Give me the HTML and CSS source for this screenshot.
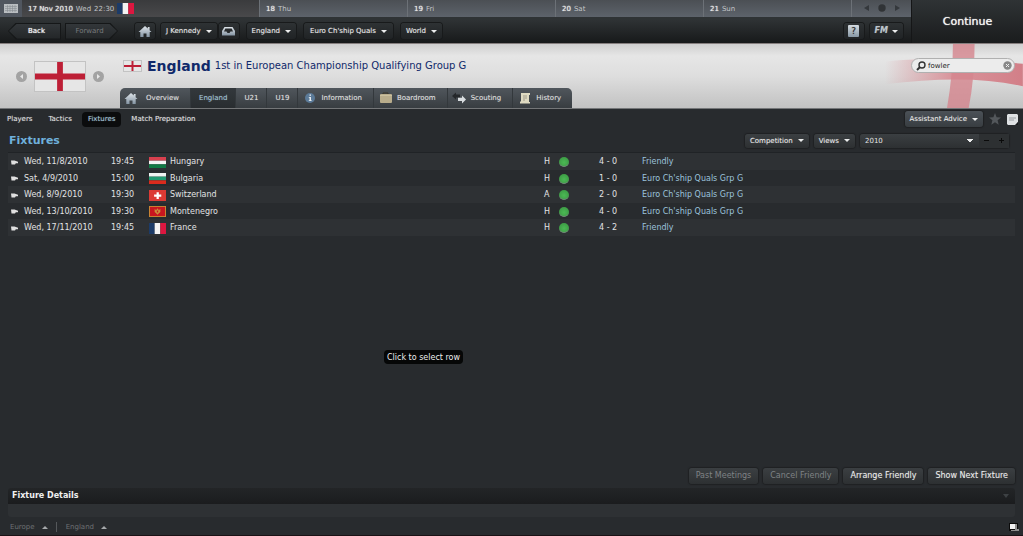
FILE: index.html
```html
<!DOCTYPE html>
<html lang="en">
<head>
    <meta charset="UTF-8">
    <meta name="viewport" content="width=device-width, initial-scale=1.0">
    <title>England - Fixtures</title>
    <link rel="stylesheet" href="styles.css">
</head>
<body>
    <!-- shared icons and flags -->
    <svg class="defs" width="0" height="0" aria-hidden="true">
        <defs>
            <linearGradient id="steel" x1="0" y1="0" x2="0" y2="1">
                <stop offset="0" stop-color="#dfe5ea"/>
                <stop offset="1" stop-color="#8494a3"/>
            </linearGradient>
            <linearGradient id="crossFade" x1="0" y1="0" x2="1" y2="0">
                <stop offset="0" stop-color="#d88a92" stop-opacity="0"/>
                <stop offset="0.5" stop-color="#d88a92" stop-opacity="0.9"/>
                <stop offset="1" stop-color="#d27f88"/>
            </linearGradient>
        </defs>
        <symbol id="home" viewBox="0 0 14 13">
            <path d="M7 1 L0.5 7 L2.3 7 L2.3 12 L5.5 12 L5.5 8.5 L8.5 8.5 L8.5 12 L11.7 12 L11.7 7 L13.5 7 L11.6 5.2 L11.6 2 L9.8 2 L9.8 3.6 Z" fill="url(#steel)"/>
        </symbol>
        <symbol id="england" viewBox="0 0 52 30" preserveAspectRatio="none">
            <path fill="#e6e6e6" d="M0 0h52v30H0z"/>
            <path fill="#bd1f36" d="M23 0h6v30h-6zM0 12h52v6H0z"/>
        </symbol>
        <symbol id="france" viewBox="0 0 18 12" preserveAspectRatio="none">
            <path fill="#1c3b68" d="M0 0h6v12H0z"/><path fill="#f3f3f3" d="M6 0h6v12H6z"/><path fill="#dd1740" d="M12 0h6v12h-6z"/>
        </symbol>
        <symbol id="hungary" viewBox="0 0 18 12" preserveAspectRatio="none">
            <path fill="#d8404e" d="M0 0h18v4H0z"/><path fill="#f3f3f3" d="M0 4h18v4H0z"/><path fill="#127a45" d="M0 8h18v4H0z"/>
        </symbol>
        <symbol id="bulgaria" viewBox="0 0 18 12" preserveAspectRatio="none">
            <path fill="#f0f2f1" d="M0 0h18v4H0z"/><path fill="#229a72" d="M0 4h18v4H0z"/><path fill="#da2b1d" d="M0 8h18v4H0z"/>
        </symbol>
        <symbol id="switzerland" viewBox="0 0 18 12" preserveAspectRatio="none">
            <path fill="#dc3a34" d="M0 0h18v12H0z"/><path fill="#fff" d="M8 2.5h2.4v2.4h2.6v2.4h-2.6v2.4H8V7.300H5.400V4.900H8z"/>
        </symbol>
        <symbol id="montenegro" viewBox="0 0 18 12" preserveAspectRatio="none">
            <path fill="#c98a35" d="M0 0h18v12H0z"/><path fill="#c8161f" d="M1 1h16v10H1z"/>
            <path d="M6 3l1.500 1.500L9 2.500l1.500 2L12 3v3.500L10.500 8 9 9.500 7.500 8 6 6.500z" fill="#c98f3c"/>
            <path d="M8.300 5h1.400v2H8.300z" fill="#c8161f"/>
        </symbol>
        <symbol id="hand" viewBox="0 0 7 5">
            <path d="M0 0.500h3.500L7 1.700v1.500H4.800L4 4.600H0.500z" fill="#e0e0e0"/>
        </symbol>
    </svg>

    <header class="top">
        <div class="top-left">
            <div class="calendar">
                <button type="button" class="cal-icon" aria-label="Calendar">
                    <svg width="14" height="9" viewBox="0 0 14 9"><path fill="#b9bdc1" d="M0 0h14v9H0z"/><path d="M1 2.500h12M1 4.500h12M1 6.500h12M3.500 1v7M6 1v7M8.500 1v7M11 1v7" stroke="#7f848a" stroke-width="0.500"/></svg>
                </button>
                <div class="day today"><b>17 Nov 2010</b> <span>Wed</span> <span>22:30</span>
                    <svg class="flag"><use href="#france"/></svg>
                </div>
                <div class="day"><b>18</b> <span>Thu</span></div>
                <div class="day"><b>19</b> <span>Fri</span></div>
                <div class="day"><b>20</b> <span>Sat</span></div>
                <div class="day"><b>21</b> <span>Sun</span></div>
                <div class="cal-nav">
                    <button type="button" aria-label="Previous"><svg width="5" height="6" viewBox="0 0 5 6"><path d="M5 0v6L0 3z" fill="#34383c"/></svg></button>
                    <button type="button" aria-label="Today"><svg width="8" height="8" viewBox="0 0 8 8"><circle cx="4" cy="4" r="3.700" fill="#303336"/></svg></button>
                    <button type="button" aria-label="Next"><svg width="5" height="6" viewBox="0 0 5 6"><path d="M0 0v6l5-3z" fill="#34383c"/></svg></button>
                </div>
            </div>
            <nav class="toolbar">
                <button type="button" class="arrow back"><span>Back</span></button>
                <button type="button" class="arrow forward" disabled><span>Forward</span></button>
                <button type="button" class="btn icon-btn" aria-label="Home"><svg width="14" height="13"><use href="#home"/></svg></button>
                <button type="button" class="btn menu">J Kennedy</button>
                <button type="button" class="btn icon-btn" aria-label="Inbox">
                    <svg width="13" height="9" viewBox="0 0 13 9"><path d="M2.500 0h8L13 4v4.500H0V4zM3.300 1.500L2 4.500h2.500l1 1.500h2l1-1.500H11L9.700 1.500z" fill="url(#steel)" fill-rule="evenodd"/></svg>
                </button>
                <button type="button" class="btn menu spaced">England</button>
                <button type="button" class="btn menu spaced wide">Euro Ch'ship Quals</button>
                <button type="button" class="btn menu spaced">World</button>
                <div class="toolbar-end">
                    <button type="button" class="btn icon-btn" aria-label="Help"><span class="help">?</span></button>
                    <button type="button" class="btn menu fm"><i>FM</i></button>
                </div>
            </nav>
        </div>
        <button type="button" class="continue">Continue</button>
    </header>

    <section class="banner">
        <svg class="cross" viewBox="0 0 140 65" aria-hidden="true">
            <path d="M0 18 Q35 12 140 20 V43 Q85 30 0 41 Z" fill="url(#crossFade)"/>
            <path d="M69 0H91Q91 35 85 65H63Q69 30 69 0Z" fill="#d5848d" opacity="0.800"/>
        </svg>
        <div class="badge">
            <button type="button" class="round" aria-label="Previous team"><svg width="3" height="5" viewBox="0 0 3 5"><path d="M3 0v5L0 2.500z" fill="#e8e8e8"/></svg></button>
            <svg class="big-flag"><use href="#england"/></svg>
            <button type="button" class="round" aria-label="Next team"><svg width="3" height="5" viewBox="0 0 3 5"><path d="M0 0v5l3-2.500z" fill="#e8e8e8"/></svg></button>
        </div>
        <div class="team">
            <div class="title">
                <svg class="title-flag"><use href="#england"/></svg>
                <h1>England</h1>
                <p>1st in European Championship Qualifying Group G</p>
            </div>
            <nav class="tabs">
                <a href="#" class="with-icon first"><svg width="14" height="13"><use href="#home"/></svg>Overview</a>
                <a href="#" class="active">England</a>
                <a href="#">U21</a>
                <a href="#">U19</a>
                <a href="#" class="with-icon">
                    <svg width="14" height="12" viewBox="0 0 14 12"><circle cx="8" cy="6" r="5" fill="#5b7a98"/><path d="M7.500 2.500h1.500v1.300H7.500zM6.800 5H9v3.200h.700V9H6.800v-.8h.7V5.800h-.7z" fill="#e9eef2"/></svg>Information</a>
                <a href="#" class="with-icon">
                    <svg width="14" height="12" viewBox="0 0 14 12"><path d="M5 2V1h5v1" stroke="#3a3426" fill="none"/><rect x="2" y="2" width="12" height="9" rx="1" fill="#b9ad8c"/><path d="M2 3.500h12" stroke="#cbc09f"/></svg>Boardroom</a>
                <a href="#" class="with-icon">
                    <svg width="14" height="12" viewBox="0 0 14 12"><path d="M0 4l4-3.500v2h4v3H4v2z" fill="#25282b"/><path d="M14 7.500l-4-4v2.300H6v3.200h4v2.500z" fill="#d9dde0"/></svg>Scouting</a>
                <a href="#" class="with-icon last">
                    <svg width="14" height="12" viewBox="0 0 14 12"><path d="M4 1h9v2h-1v7h1v1.500H3V9.500h1z" fill="#dedac1"/><path d="M6 4h4M6 6h4M6 8h2" stroke="#8f8c7c" stroke-width="0.800"/></svg>History</a>
            </nav>
        </div>
        <div class="search">
            <svg width="10" height="10" viewBox="0 0 10 10"><circle cx="6" cy="4" r="3" fill="none" stroke="#333" stroke-width="1.400"/><path d="M4 6L1 9" stroke="#333" stroke-width="2"/></svg>
            <input type="text" aria-label="Search" value="fowler">
            <button type="button" aria-label="Clear search"><svg width="9" height="9" viewBox="0 0 9 9"><circle cx="4.500" cy="4.500" r="4.200" fill="#888"/><path d="M3 3l3 3M6 3L3 6" stroke="#eee"/></svg></button>
        </div>
    </section>

    <nav class="subnav">
        <a href="#">Players</a>
        <a href="#">Tactics</a>
        <a href="#" class="active">Fixtures</a>
        <a href="#">Match Preparation</a>
        <div class="subnav-end">
            <button type="button" class="btn menu advice">Assistant Advice</button>
            <button type="button" class="plain" aria-label="Bookmark"><svg width="12" height="12" viewBox="0 0 12 12"><path d="M6 0l1.600 4.200L12 4.500 8.600 7.300 9.700 11.700 6 9.200 2.300 11.700 3.400 7.300 0 4.500l4.400-.3z" fill="#53575b"/></svg></button>
            <button type="button" class="plain" aria-label="Notes"><svg width="11" height="11" viewBox="0 0 11 11"><path d="M1 0h9l1 1v7l-2 3H1l-1-1V1z" fill="#dfe2e4"/><path d="M2 4h7M2 6h5" stroke="#9a9ea2"/><path d="M11 8v3H8z" fill="#17191b"/></svg></button>
        </div>
    </nav>

    <main>
        <div class="heading">
            <h2>Fixtures</h2>
            <button type="button" class="btn menu">Competition</button>
            <button type="button" class="btn menu">Views</button>
            <div class="season">
                <select aria-label="Season"><option>2010</option></select>
                <button type="button" aria-label="Previous season"><svg width="5" height="5" viewBox="0 0 5 5"><path d="M0 2h5v1H0z" fill="#0a0a0a"/></svg></button>
                <button type="button" aria-label="Next season"><svg width="5" height="5" viewBox="0 0 5 5"><path d="M0 2h5v1H0zM2 0h1v5H2z" fill="#0a0a0a"/></svg></button>
            </div>
        </div>

        <table class="fixtures">
            <colgroup>
                <col class="c-hand"><col class="c-date"><col class="c-time"><col class="c-flag"><col class="c-team">
                <col class="c-venue"><col class="c-result"><col class="c-score"><col class="c-comp">
            </colgroup>
            <tbody>
                <tr>
                    <td><svg class="hand"><use href="#hand"/></svg></td><td>Wed, 11/8/2010</td><td>19:45</td>
                    <td><svg class="flag"><use href="#hungary"/></svg></td><td>Hungary</td>
                    <td>H</td><td><span class="dot"></span></td><td>4 - 0</td><td><a href="#">Friendly</a></td>
                </tr>
                <tr>
                    <td><svg class="hand"><use href="#hand"/></svg></td><td>Sat, 4/9/2010</td><td>15:00</td>
                    <td><svg class="flag"><use href="#bulgaria"/></svg></td><td>Bulgaria</td>
                    <td>H</td><td><span class="dot"></span></td><td>1 - 0</td><td><a href="#">Euro Ch'ship Quals Grp G</a></td>
                </tr>
                <tr>
                    <td><svg class="hand"><use href="#hand"/></svg></td><td>Wed, 8/9/2010</td><td>19:30</td>
                    <td><svg class="flag"><use href="#switzerland"/></svg></td><td>Switzerland</td>
                    <td>A</td><td><span class="dot"></span></td><td>2 - 0</td><td><a href="#">Euro Ch'ship Quals Grp G</a></td>
                </tr>
                <tr>
                    <td><svg class="hand"><use href="#hand"/></svg></td><td>Wed, 13/10/2010</td><td>19:30</td>
                    <td><svg class="flag"><use href="#montenegro"/></svg></td><td>Montenegro</td>
                    <td>H</td><td><span class="dot"></span></td><td>4 - 0</td><td><a href="#">Euro Ch'ship Quals Grp G</a></td>
                </tr>
                <tr>
                    <td><svg class="hand"><use href="#hand"/></svg></td><td>Wed, 17/11/2010</td><td>19:45</td>
                    <td><svg class="flag"><use href="#france"/></svg></td><td>France</td>
                    <td>H</td><td><span class="dot"></span></td><td>4 - 2</td><td><a href="#">Friendly</a></td>
                </tr>
            </tbody>
        </table>

        <div class="tooltip" role="tooltip">Click to select row</div>

        <div class="actions">
            <button type="button" class="btn" disabled>Past Meetings</button>
            <button type="button" class="btn" disabled>Cancel Friendly</button>
            <button type="button" class="btn">Arrange Friendly</button>
            <button type="button" class="btn">Show Next Fixture</button>
        </div>

        <section class="details">
            <h3>Fixture Details</h3>
            <div class="details-body"></div>
        </section>
    </main>

    <footer>
        <a href="#">Europe</a>
        <a href="#">England</a>
        <svg class="screen" width="10" height="8" viewBox="0 0 10 8"><path fill="#0a0a0a" d="M0 0h9v8H0z"/><path fill="#f2f2f2" d="M1 1h5v5H1z"/><path fill="#8f8f8f" d="M6 1h2v5h2v2H2V7h4z"/></svg>
    </footer>
</body>
</html>
```

FILE: styles.css
```css
* {
    box-sizing: border-box;
}

body {
    margin: 0;
    min-height: 100vh;
    display: flex;
    flex-direction: column;
    font-family: "DejaVu Sans", Verdana, sans-serif;
    font-size: 8px;
    line-height: 10px;
    color: #e2e3e4;
    background: #282b2e;
}

h1, h2, h3, p {
    margin: 0;
}

a {
    color: inherit;
    text-decoration: none;
}

button, input, select {
    margin: 0;
    padding: 0;
    border: none;
    background: none;
    color: inherit;
    font: inherit;
}

svg {
    display: block;
    flex: none;
}

.defs {
    position: absolute;
}

.flag {
    width: 17px;
    height: 11px;
}

/* top bars */
.top {
    display: flex;
    height: 44px;
    border-bottom: 1px solid #857e7e;
    background: linear-gradient(#2f3335 45%, #17191a);
}

.top-left {
    flex: 1;
}

.calendar {
    display: grid;
    grid-template-columns: 22px 237px repeat(4, 1fr) 60px;
    height: 17px;
    font-size: 7px;
    background: linear-gradient(#4b4f54, #5d636b);
}

.cal-icon {
    display: grid;
    place-items: center;
    background: #50565f;
}

.day {
    display: flex;
    align-items: center;
    gap: 3px;
    padding-left: 6px;
    border-left: 1px solid #6c7177;
    color: #c3c6c9;
}

.day b {
    font-weight: normal;
    color: #e8e8e8;
    text-shadow: 0 0 1px #e8e8e8;
}

.today {
    border-left: none;
    background: linear-gradient(#3a3b3d, #49494b);
}

.cal-nav {
    display: flex;
    align-items: center;
    justify-content: center;
    gap: 9px;
    padding-bottom: 2px;
    border-left: 1px solid #6c7177;
}

.toolbar {
    display: flex;
    align-items: center;
    height: 26px;
    padding: 2px 8px 0;
    font-size: 7px;
}

.btn {
    height: 16px;
    padding: 0 7px;
    border-radius: 3px;
    background: linear-gradient(#3b3f42, #2d3032);
    box-shadow: 0 0 1px 1px #1f2123;
    color: #eceded;
    text-shadow: 0 0 1px #777;
    white-space: nowrap;
}

.btn:disabled {
    color: #7f8285;
    text-shadow: none;
}

.toolbar .btn {
    background: linear-gradient(#2e3234, #202325);
    box-shadow: 0 0 0 1px #181a1b;
}

.icon-btn {
    display: grid;
    place-items: center;
    width: 20px;
    padding: 0;
}

.menu {
    display: flex;
    align-items: center;
    gap: 5px;
    padding: 0 5px;
}

.menu::after {
    content: "";
    border: 3px solid transparent;
    border-top-color: #eceded;
    border-bottom: none;
}

.arrow {
    width: 53px;
    height: 17px;
    background: #151718;
    clip-path: polygon(0 50%, 8px 0, 100% 0, 100% 100%, 8px 100%);
    color: #f4f4f4;
    text-shadow: 0 0 1px #f4f4f4;
}

.arrow span {
    display: grid;
    place-items: center;
    height: 15px;
    margin: 1px;
    padding-left: 4px;
    background: linear-gradient(#33373a, #232628);
    clip-path: polygon(0 50%, 8px 0, 100% 0, 100% 100%, 8px 100%);
}

.forward {
    margin: 0 17px 0 4px;
    color: #777a7c;
    text-shadow: none;
}

.forward, .forward span {
    clip-path: polygon(0 0, calc(100% - 8px) 0, 100% 50%, calc(100% - 8px) 100%, 0 100%);
}

.forward span {
    padding: 0 4px 0 0;
}

.toolbar .icon-btn + .menu {
    margin: 0 2px 0 6px;
}

.toolbar .spaced, .toolbar .icon-btn + .spaced {
    margin: 0 0 0 8px;
}

.toolbar .wide {
    padding: 0 6px;
}

.toolbar-end {
    display: flex;
    gap: 6px;
    margin-left: auto;
}

.toolbar-end .icon-btn + .fm {
    gap: 4px;
    margin: 0;
}

.help {
    width: 11px;
    border-radius: 1px;
    background: linear-gradient(#d4dbe0, #8797a5);
    color: #222;
    font-size: 9px;
    line-height: 12px;
}

.fm i {
    color: #bcc5cc;
    font-size: 8px;
    font-weight: bold;
}

.continue {
    width: 112px;
    border-left: 1px solid #151617;
    background: linear-gradient(#2f3335, #1a1c1d);
    color: #f5f5f5;
    font-size: 11px;
    text-shadow: 0 0 1px #f5f5f5;
}

/* team banner */
.banner {
    position: relative;
    display: flex;
    height: 65px;
    border-bottom: 1px solid #747678;
    background: linear-gradient(#cfcfcf, #e6e6e6 12px, #dedede 32px, #c2c2c2);
}

.cross {
    position: absolute;
    top: 0;
    right: 0;
    height: 64px;
}

.badge {
    display: flex;
    align-items: center;
    gap: 7px;
    width: 120px;
    padding-left: 16px;
}

.round {
    display: grid;
    place-items: center;
    width: 11px;
    height: 11px;
    border-radius: 50%;
    background: #a3a3a3;
}

.big-flag {
    width: 52px;
    height: 31px;
    border: 1px solid #c3c3c3;
}

.team {
    display: flex;
    flex-direction: column;
    justify-content: space-between;
    flex: 1;
}

.title {
    display: flex;
    align-items: center;
    height: 44px;
    padding-left: 3px;
    color: #10296a;
}

.title-flag {
    width: 19px;
    height: 12px;
    margin-right: 5px;
    border: 1px solid #c3c3c3;
}

.title h1 {
    margin-right: 4px;
    font-size: 14px;
    line-height: 20px;
}

.title p {
    font-size: 10px;
    line-height: 14px;
}

.tabs {
    display: flex;
    align-self: flex-start;
    height: 20px;
    overflow: hidden;
    border-radius: 5px 5px 0 0;
    background: linear-gradient(#50565c, #383d41);
    font-size: 7px;
}

.tabs a {
    display: flex;
    align-items: center;
    padding: 0 8px;
    border-right: 1px solid #33383c;
    text-shadow: 0 0 1px #777;
}

.tabs a.active {
    background: linear-gradient(#33383c, #292d30);
    color: #9cc3dc;
}

.tabs a.with-icon {
    gap: 5px;
    padding: 0 11px 0 4px;
}

.tabs a.first {
    gap: 8px;
}

.tabs a.last {
    border-right: none;
}

.search {
    position: relative;
    display: flex;
    align-items: center;
    align-self: flex-start;
    width: 104px;
    height: 15px;
    margin: 14px 8px 0 0;
    padding: 0 2px 0 4px;
    border: 1px solid #b0b0b0;
    border-radius: 8px;
    background: #ececec;
    color: #222;
    font-size: 7px;
}

.search input {
    flex: 1;
    min-width: 0;
    margin-left: 2px;
}

/* sub navigation */
.subnav {
    display: flex;
    align-items: center;
    height: 20px;
    padding: 0 5px 0 1px;
    font-size: 7px;
}

.subnav a {
    height: 15px;
    padding: 0 6px;
    margin-right: 4px;
    border-radius: 4px;
    line-height: 15px;
    text-shadow: 0 0 1px #777;
}

.subnav a.active {
    background: #0b0c0d;
    color: #9cc3dc;
}

.subnav-end {
    display: flex;
    align-items: center;
    gap: 6px;
    margin-left: auto;
}

.advice {
    background: linear-gradient(#4b5157, #383d41);
}

/* fixtures */
main {
    position: relative;
    flex: 1;
    display: flex;
    flex-direction: column;
    padding: 0 8px;
}

.heading {
    display: flex;
    align-items: center;
    gap: 5px;
    height: 24px;
    padding-right: 6px;
    border-bottom: 1px solid #202326;
    font-size: 7px;
}

.heading .btn {
    height: 14px;
}

.heading h2 {
    margin-right: auto;
    padding-left: 1px;
    color: #6fb1dc;
    font-size: 11px;
    line-height: 16px;
}

.season {
    display: flex;
    width: 149px;
    height: 14px;
    border-radius: 3px;
    background: linear-gradient(#3b3f42, #2d3032);
    box-shadow: 0 0 1px 1px #1f2123;
}

.season select {
    flex: 1;
    appearance: none;
    padding: 0 5px;
    background: conic-gradient(from 315deg at 50% 100%, #eceded 90deg, transparent 0) right 6px center / 6px 3px no-repeat;
}

.season button {
    display: grid;
    place-items: center;
    width: 15px;
    background: #2d3032;
}

.fixtures {
    width: 100%;
    table-layout: fixed;
    border-collapse: collapse;
}

.fixtures td {
    height: 16px;
    padding: 1px 0 0;
    white-space: nowrap;
}

.fixtures tr:nth-child(odd) td {
    height: 17px;
    background: #2e3134;
}

.c-hand { width: 16px; }
.c-date { width: 87px; }
.c-time { width: 38px; }
.c-flag { width: 21px; }
.c-venue { width: 15px; }
.c-result { width: 40px; }
.c-score { width: 43px; }
.c-comp { width: 373px; }

.fixtures a {
    color: #9cc3dc;
}

.hand {
    width: 7px;
    height: 5px;
    margin-left: 3px;
}

.dot {
    display: block;
    width: 10px;
    height: 10px;
    border-radius: 50%;
    background: radial-gradient(circle at 50% 60%, #4cb955, #37923f);
    border-bottom: 1px solid #74877a;
}

.tooltip {
    position: absolute;
    left: 384px;
    top: 221px;
    height: 14px;
    padding: 0 3px;
    border-radius: 4px;
    background: #060707;
    color: #eceded;
    line-height: 15px;
}

.actions {
    display: flex;
    justify-content: flex-end;
    gap: 5px;
    margin-top: auto;
    padding-bottom: 4px;
}

.details h3 {
    display: flex;
    align-items: center;
    justify-content: space-between;
    height: 16px;
    padding: 0 6px 0 4px;
    border-radius: 3px 3px 0 0;
    background: linear-gradient(#232527, #1b1c1e);
    color: #f0f0f0;
    font-size: 8px;
}

.details h3::after {
    content: "";
    border: 3px solid transparent;
    border-top: 4px solid #3d4144;
    border-bottom: none;
}

.details-body {
    height: 13px;
    border-radius: 0 0 3px 3px;
    background: #2e3134;
}

footer {
    display: flex;
    align-items: center;
    height: 19px;
    padding: 2px 4px 0 10px;
    border-bottom: 1px solid #1b1215;
    color: #6d7073;
    font-size: 7px;
}

footer a {
    display: flex;
    align-items: center;
    gap: 7px;
}

footer a::after {
    content: "";
    border: 3px solid transparent;
    border-top: none;
    border-bottom-color: #a5a8aa;
}

footer a + a {
    margin-left: 8px;
    padding-left: 9px;
    border-left: 1px solid #55585b;
}

.screen {
    margin-left: auto;
}
```
